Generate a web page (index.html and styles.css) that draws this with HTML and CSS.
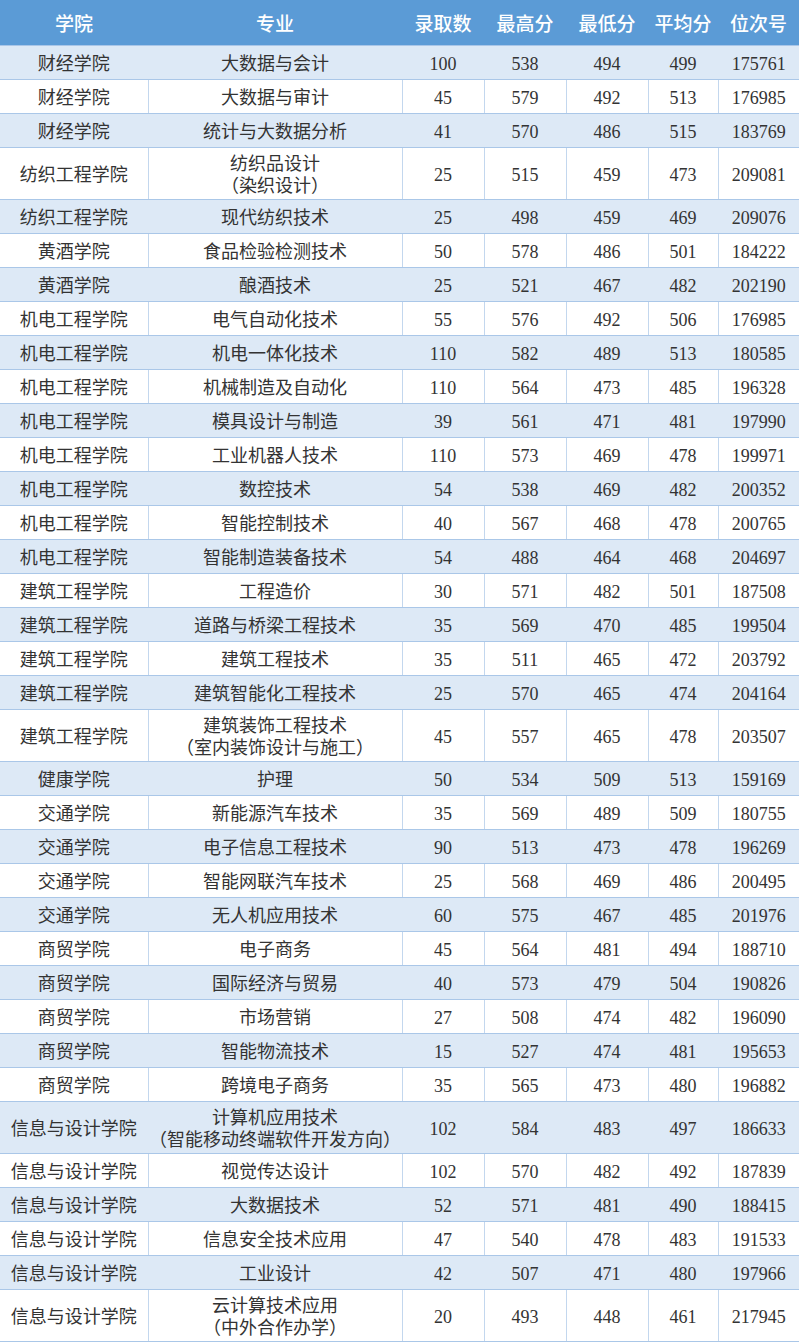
FILE: index.html
```html
<!DOCTYPE html>
<html lang="zh-CN">
<head>
<meta charset="utf-8">
<title>录取数据</title>
<link rel="stylesheet" href="styles.css">
</head>
<body>
<table class="score-table">
  <colgroup>
    <col class="c-college"><col class="c-major"><col class="c-num"><col class="c-num"><col class="c-num"><col class="c-avg"><col class="c-rank">
  </colgroup>
  <thead>
    <tr class="head"><th>学院</th><th>专业</th><th>录取数</th><th>最高分</th><th>最低分</th><th>平均分</th><th>位次号</th></tr>
  </thead>
  <tbody>
    <tr><td>财经学院</td><td>大数据与会计</td><td>100</td><td>538</td><td>494</td><td>499</td><td>175761</td></tr>
    <tr><td>财经学院</td><td>大数据与审计</td><td>45</td><td>579</td><td>492</td><td>513</td><td>176985</td></tr>
    <tr><td>财经学院</td><td>统计与大数据分析</td><td>41</td><td>570</td><td>486</td><td>515</td><td>183769</td></tr>
    <tr class="tall"><td>纺织工程学院</td><td>纺织品设计<br>（染织设计）</td><td>25</td><td>515</td><td>459</td><td>473</td><td>209081</td></tr>
    <tr><td>纺织工程学院</td><td>现代纺织技术</td><td>25</td><td>498</td><td>459</td><td>469</td><td>209076</td></tr>
    <tr><td>黄酒学院</td><td>食品检验检测技术</td><td>50</td><td>578</td><td>486</td><td>501</td><td>184222</td></tr>
    <tr><td>黄酒学院</td><td>酿酒技术</td><td>25</td><td>521</td><td>467</td><td>482</td><td>202190</td></tr>
    <tr><td>机电工程学院</td><td>电气自动化技术</td><td>55</td><td>576</td><td>492</td><td>506</td><td>176985</td></tr>
    <tr><td>机电工程学院</td><td>机电一体化技术</td><td>110</td><td>582</td><td>489</td><td>513</td><td>180585</td></tr>
    <tr><td>机电工程学院</td><td>机械制造及自动化</td><td>110</td><td>564</td><td>473</td><td>485</td><td>196328</td></tr>
    <tr><td>机电工程学院</td><td>模具设计与制造</td><td>39</td><td>561</td><td>471</td><td>481</td><td>197990</td></tr>
    <tr><td>机电工程学院</td><td>工业机器人技术</td><td>110</td><td>573</td><td>469</td><td>478</td><td>199971</td></tr>
    <tr><td>机电工程学院</td><td>数控技术</td><td>54</td><td>538</td><td>469</td><td>482</td><td>200352</td></tr>
    <tr><td>机电工程学院</td><td>智能控制技术</td><td>40</td><td>567</td><td>468</td><td>478</td><td>200765</td></tr>
    <tr><td>机电工程学院</td><td>智能制造装备技术</td><td>54</td><td>488</td><td>464</td><td>468</td><td>204697</td></tr>
    <tr><td>建筑工程学院</td><td>工程造价</td><td>30</td><td>571</td><td>482</td><td>501</td><td>187508</td></tr>
    <tr><td>建筑工程学院</td><td>道路与桥梁工程技术</td><td>35</td><td>569</td><td>470</td><td>485</td><td>199504</td></tr>
    <tr><td>建筑工程学院</td><td>建筑工程技术</td><td>35</td><td>511</td><td>465</td><td>472</td><td>203792</td></tr>
    <tr><td>建筑工程学院</td><td>建筑智能化工程技术</td><td>25</td><td>570</td><td>465</td><td>474</td><td>204164</td></tr>
    <tr class="tall"><td>建筑工程学院</td><td>建筑装饰工程技术<br>（室内装饰设计与施工）</td><td>45</td><td>557</td><td>465</td><td>478</td><td>203507</td></tr>
    <tr><td>健康学院</td><td>护理</td><td>50</td><td>534</td><td>509</td><td>513</td><td>159169</td></tr>
    <tr><td>交通学院</td><td>新能源汽车技术</td><td>35</td><td>569</td><td>489</td><td>509</td><td>180755</td></tr>
    <tr><td>交通学院</td><td>电子信息工程技术</td><td>90</td><td>513</td><td>473</td><td>478</td><td>196269</td></tr>
    <tr><td>交通学院</td><td>智能网联汽车技术</td><td>25</td><td>568</td><td>469</td><td>486</td><td>200495</td></tr>
    <tr><td>交通学院</td><td>无人机应用技术</td><td>60</td><td>575</td><td>467</td><td>485</td><td>201976</td></tr>
    <tr><td>商贸学院</td><td>电子商务</td><td>45</td><td>564</td><td>481</td><td>494</td><td>188710</td></tr>
    <tr><td>商贸学院</td><td>国际经济与贸易</td><td>40</td><td>573</td><td>479</td><td>504</td><td>190826</td></tr>
    <tr><td>商贸学院</td><td>市场营销</td><td>27</td><td>508</td><td>474</td><td>482</td><td>196090</td></tr>
    <tr><td>商贸学院</td><td>智能物流技术</td><td>15</td><td>527</td><td>474</td><td>481</td><td>195653</td></tr>
    <tr><td>商贸学院</td><td>跨境电子商务</td><td>35</td><td>565</td><td>473</td><td>480</td><td>196882</td></tr>
    <tr class="tall"><td>信息与设计学院</td><td>计算机应用技术<br>（智能移动终端软件开发方向）</td><td>102</td><td>584</td><td>483</td><td>497</td><td>186633</td></tr>
    <tr><td>信息与设计学院</td><td>视觉传达设计</td><td>102</td><td>570</td><td>482</td><td>492</td><td>187839</td></tr>
    <tr><td>信息与设计学院</td><td>大数据技术</td><td>52</td><td>571</td><td>481</td><td>490</td><td>188415</td></tr>
    <tr><td>信息与设计学院</td><td>信息安全技术应用</td><td>47</td><td>540</td><td>478</td><td>483</td><td>191533</td></tr>
    <tr><td>信息与设计学院</td><td>工业设计</td><td>42</td><td>507</td><td>471</td><td>480</td><td>197966</td></tr>
    <tr class="tall"><td>信息与设计学院</td><td>云计算技术应用<br>（中外合作办学）</td><td>20</td><td>493</td><td>448</td><td>461</td><td>217945</td></tr>
  </tbody>
</table>
</body>
</html>
```

FILE: styles.css
```css
html, body {
  margin: 0;
  padding: 0;
  background: #ffffff;
}

.score-table {
  width: 799px;
  table-layout: fixed;
  border-collapse: collapse;
  font-family: "Liberation Serif", "Noto Sans CJK SC", serif;
  font-size: 18px;
  color: #333333;
}

.c-college { width: 148px; }
.c-major { width: 254px; }
.c-num { width: 82px; }
.c-avg { width: 70px; }
.c-rank { width: 81px; }

.score-table th,
.score-table td {
  padding: 0;
  text-align: center;
  vertical-align: middle;
  line-height: 22px;
  white-space: nowrap;
}

.head th {
  height: 45px;
  background: #5b9bd6;
  color: #ffffff;
  font-family: "Noto Sans CJK SC", sans-serif;
  font-size: 19px;
  font-weight: 500;
  border-bottom: 1px solid #a9c6e8;
}

.score-table td {
  height: 31px;
  padding-top: 2px;
  border-bottom: 1px solid #aac7e8;
  border-left: 1px solid #c3d7ee;
}

.score-table td:first-child {
  border-left: none;
}

.score-table tbody tr:nth-child(odd) td {
  background: #dde9f6;
  border-left-color: #dde9f6;
}

.score-table tr.tall td {
  height: 49px;
}
```
